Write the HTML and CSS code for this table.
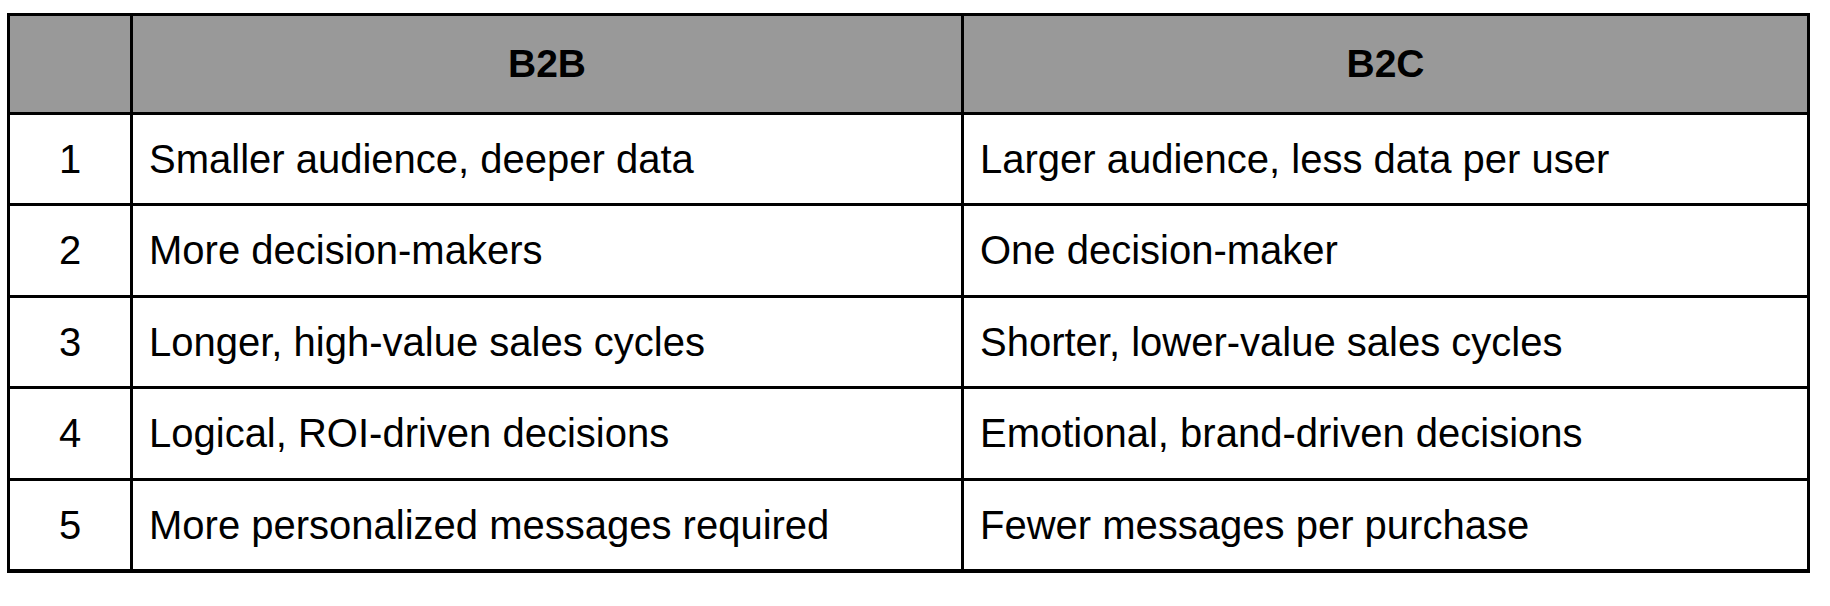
FILE: index.html
```html
<!DOCTYPE html>
<html>
<head>
<meta charset="utf-8">
<link rel="stylesheet" href="styles.css">
</head>
<body>
<table class="cmp">
  <colgroup>
    <col class="c-num">
    <col class="c-b2b">
    <col class="c-b2c">
  </colgroup>
  <thead>
    <tr>
      <th></th>
      <th>B2B</th>
      <th>B2C</th>
    </tr>
  </thead>
  <tbody>
    <tr><td class="num">1</td><td>Smaller audience, deeper data</td><td>Larger audience, less data per user</td></tr>
    <tr><td class="num">2</td><td>More decision-makers</td><td>One decision-maker</td></tr>
    <tr><td class="num">3</td><td>Longer, high-value sales cycles</td><td>Shorter, lower-value sales cycles</td></tr>
    <tr><td class="num">4</td><td>Logical, ROI-driven decisions</td><td>Emotional, brand-driven decisions</td></tr>
    <tr><td class="num">5</td><td>More personalized messages required</td><td>Fewer messages per purchase</td></tr>
  </tbody>
</table>
</body>
</html>
```

FILE: styles.css
```css
html, body {
  margin: 0;
  padding: 0;
  background: #ffffff;
}
body {
  padding: 13px 0 0 7px;
  font-family: "Liberation Sans", Arial, sans-serif;
  color: #000000;
}
.cmp {
  border-collapse: separate;
  border-spacing: 0;
  border-left: 3px solid #000;
  border-top: 3px solid #000;
  table-layout: fixed;
  width: 1803px;
}
.c-num { width: 123px; }
.c-b2b { width: 831px; }
.c-b2c { width: 846px; }
.cmp th, .cmp td {
  border-right: 3px solid #000;
  border-bottom: 3px solid #000;
  padding: 0;
  box-sizing: content-box;
}
.cmp th {
  background: #999999;
  height: 96px;
  font-size: 39px;
  font-weight: bold;
  text-align: center;
}
.cmp td {
  height: 88px;
  font-size: 40px;
  text-align: left;
  padding-left: 16px;
}
.cmp tbody tr:nth-child(even) td {
  height: 89px;
}
.cmp td.num {
  text-align: center;
  padding-left: 0;
}
.cmp tbody tr:last-child td {
  border-bottom-width: 4px;
}
```
